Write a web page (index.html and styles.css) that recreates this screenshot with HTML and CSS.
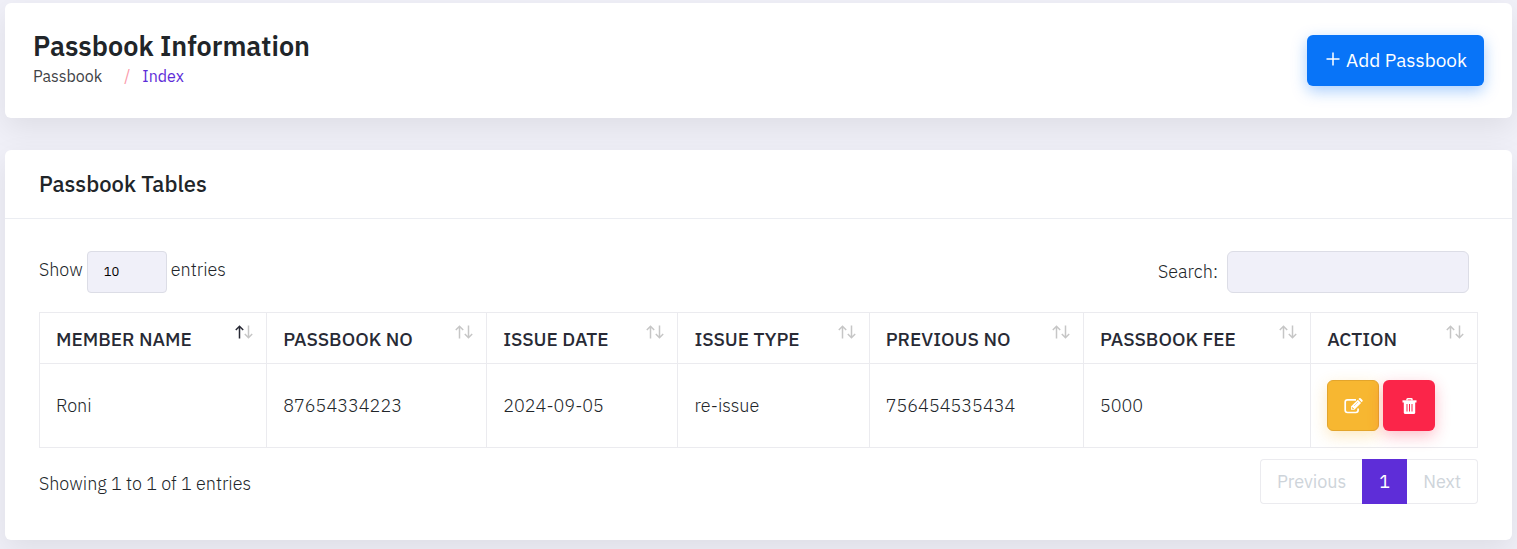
FILE: index.html
```html
<!DOCTYPE html>
<html lang="en">
<head>
<meta charset="utf-8">
<title>Passbook Information</title>
<link rel="stylesheet" href="styles.css">
</head>
<body>
<svg class="sprite" aria-hidden="true">
  <symbol id="arrow-up" viewBox="0 0 9 14"><path d="M4.5 13.5V1.500M.8 5l3.700-3.700L8.200 5" fill="none" stroke="currentColor" stroke-width="1.5"/></symbol>
  <symbol id="arrow-down" viewBox="0 0 9 14"><path d="M4.5 .5v12M.8 9l3.700 3.700L8.200 9" fill="none" stroke="currentColor" stroke-width="1.5"/></symbol>
</svg>
<main class="page">
  <header class="card page-header">
    <div>
      <h1 class="page-title">Passbook Information</h1>
      <nav class="breadcrumb" aria-label="Breadcrumb">
        <span>Passbook</span>
        <span class="breadcrumb-separator">/</span>
        <a class="breadcrumb-link" href="#">Index</a>
      </nav>
    </div>
    <button class="button button-add" type="button">
      <svg class="icon-plus" viewBox="0 0 14 16" aria-hidden="true"><path d="M7 .5v13M.5 7h13" stroke="currentColor" stroke-width="1.5"/></svg>
      Add Passbook
    </button>
  </header>

  <section class="card">
    <h2 class="card-title">Passbook Tables</h2>
    <div class="card-body">
      <div class="controls">
        <div class="length">
          <label for="length">Show</label>
          <select class="field length-select" id="length"><option>10</option><option>25</option><option>50</option></select>
          <span>entries</span>
        </div>
        <div class="search">
          <label for="search">Search:</label>
          <input class="field search-input" id="search" type="search">
        </div>
      </div>
      <table class="table">
        <colgroup>
          <col class="col-member"><col class="col-passbook"><col class="col-date"><col class="col-type"><col class="col-previous"><col class="col-fee"><col class="col-action">
        </colgroup>
        <thead>
          <tr>
            <th scope="col"><div class="heading">MEMBER NAME<span class="sort sort-ascending"><svg><use href="#arrow-up"/></svg><svg><use href="#arrow-down"/></svg></span></div></th>
            <th scope="col"><div class="heading">PASSBOOK NO<span class="sort"><svg><use href="#arrow-up"/></svg><svg><use href="#arrow-down"/></svg></span></div></th>
            <th scope="col"><div class="heading">ISSUE DATE<span class="sort"><svg><use href="#arrow-up"/></svg><svg><use href="#arrow-down"/></svg></span></div></th>
            <th scope="col"><div class="heading">ISSUE TYPE<span class="sort"><svg><use href="#arrow-up"/></svg><svg><use href="#arrow-down"/></svg></span></div></th>
            <th scope="col"><div class="heading">PREVIOUS NO<span class="sort"><svg><use href="#arrow-up"/></svg><svg><use href="#arrow-down"/></svg></span></div></th>
            <th scope="col"><div class="heading">PASSBOOK FEE<span class="sort"><svg><use href="#arrow-up"/></svg><svg><use href="#arrow-down"/></svg></span></div></th>
            <th scope="col"><div class="heading">ACTION<span class="sort"><svg><use href="#arrow-up"/></svg><svg><use href="#arrow-down"/></svg></span></div></th>
          </tr>
        </thead>
        <tbody>
          <tr>
            <td>Roni</td>
            <td>87654334223</td>
            <td>2024-09-05</td>
            <td>re-issue</td>
            <td>756454535434</td>
            <td>5000</td>
            <td>
              <div class="actions">
                <button class="button button-edit" type="button" aria-label="Edit">
                  <svg class="icon-edit" viewBox="0 0 19 16" aria-hidden="true"><path d="M12 1.800H3.500Q1.200 1.800 1.200 4v8.300q0 2.200 2.300 2.200h8.300q2.300 0 2.300-2.200V10.500" fill="none" stroke="currentColor" stroke-width="1.700"/><path d="M7 8.500L13.800 1.700l3.300 3.300L10.300 11.800H7z" fill="currentColor"/><path d="M14.500 1l.7-.7q.7-.5 1.400 0l1.800 1.800q.6.700 0 1.400l-.7.700z" fill="currentColor"/><path d="M8.300 9v1.500h1.600" fill="none" stroke="#f7b731" stroke-width=".8"/><path d="M10 8l4-4" stroke="#f7b731" stroke-width=".5"/></svg>
                </button>
                <button class="button button-delete" type="button" aria-label="Delete">
                  <svg class="icon-trash" viewBox="0 0 15 16" aria-hidden="true"><path d="M5 2.500V1.500Q5 .8 5.700 .8h3.600Q10 .8 10 1.500v1" fill="none" stroke="currentColor" stroke-width="1.500"/><path d="M.5 2.300h14v2.200H.5z" fill="currentColor"/><path d="M1.800 4h11.400v10.500q0 1.500-1.500 1.500H3.300q-1.500 0-1.500-1.500z" fill="currentColor"/><path d="M5 6v7.500M7.500 6v7.500M10 6v7.500" stroke="#fb2549" stroke-width="1"/></svg>
                </button>
              </div>
            </td>
          </tr>
        </tbody>
      </table>
      <footer class="table-footer">
        <p class="summary">Showing 1 to 1 of 1 entries</p>
        <nav class="pagination" aria-label="Table pages">
          <button class="page-button" type="button" disabled>Previous</button>
          <button class="page-button page-current" type="button" aria-current="page">1</button>
          <button class="page-button" type="button" disabled>Next</button>
        </nav>
      </footer>
    </div>
  </section>
</main>
</body>
</html>
```
FILE: styles.css
```css
* {
  box-sizing: border-box;
}

body {
  margin: 0;
  background: #f0f0f8;
  color: #212529;
  font-family: "IBM Plex Sans", Roboto, "Noto Sans", sans-serif;
  font-size: 18px;
  font-weight: 300;
  line-height: 28px;
}

button,
input,
select {
  font: inherit;
}

.sprite {
  position: absolute;
  width: 0;
  height: 0;
}

.page {
  display: flex;
  flex-direction: column;
  gap: 32px;
  padding: 3px 5px 9px;
}

.card {
  border-radius: 6px;
  background: #fff;
  box-shadow: 0 10px 30px rgba(0, 0, 0, 0.08);
}

.page-header {
  display: flex;
  align-items: center;
  justify-content: space-between;
  padding: 27px 28px 28px;
}

.page-title {
  margin: 0;
  font-size: 27px;
  font-weight: 600;
  line-height: 32px;
}

.breadcrumb {
  display: flex;
  color: #3f4347;
  font-size: 16px;
  font-weight: 400;
}

.breadcrumb-separator {
  padding: 0 12px 0 22px;
  color: #fb9aab;
}

.breadcrumb-link {
  color: #5e2dd8;
  text-decoration: none;
}

.button {
  display: flex;
  align-items: center;
  justify-content: center;
  border: 1px solid transparent;
  border-radius: 6px;
  color: #fff;
}

.button-add {
  gap: 6px;
  height: 51px;
  padding: 0 16px 0 18px;
  background: #0874f8;
  box-shadow: 0 5px 15px rgba(8, 116, 248, 0.35);
  font-size: 19px;
  font-weight: 400;
}

.icon-plus {
  width: 14px;
  height: 16px;
}

.card-title {
  margin: 0;
  padding: 20px 34px;
  border-bottom: 1px solid #ebedf2;
  font-size: 22px;
  font-weight: 500;
}

.card-body {
  padding: 32px 34px 36px;
}

.controls {
  display: flex;
  justify-content: space-between;
  margin-bottom: 19px;
  padding-right: 9px;
}

.length,
.search {
  display: flex;
  align-items: center;
}

.length {
  align-items: flex-start;
  gap: 4px;
  line-height: 38px;
}

.search {
  gap: 9px;
}

.field {
  height: 42px;
  padding: 0 16px;
  border: 1px solid #dcdde6;
  border-radius: 6px;
  background: #f0f0f9;
  color: #000;
}

.length-select {
  width: 80px;
  border-radius: 4px;
  appearance: none;
  font-size: 13px;
  font-weight: 400;
}

.search-input {
  width: 242px;
}

.table {
  width: 100%;
  border-collapse: collapse;
  table-layout: fixed;
}

.col-member { width: 15.8%; }
.col-passbook { width: 15.3%; }
.col-date { width: 13.3%; }
.col-type { width: 13.3%; }
.col-previous { width: 14.9%; }
.col-fee { width: 15.8%; }
.col-action { width: 11.6%; }

.table th,
.table td {
  border: 1px solid #ebebef;
  text-align: left;
}

.table th {
  padding: 12px 13px 10px 16px;
  font-size: 19px;
  font-weight: 500;
}

.table td {
  padding: 16px;
}

.heading {
  display: flex;
  align-items: flex-start;
  justify-content: space-between;
  color: #282a35;
  white-space: nowrap;
}

.sort {
  display: flex;
  color: #c6c6c6;
}

.sort svg {
  width: 9px;
  height: 14px;
}

.sort-ascending svg:first-child {
  color: #282a35;
}

.actions {
  display: flex;
  gap: 4px;
}

.button-edit,
.button-delete {
  width: 52px;
  height: 51px;
  padding: 0;
}

.button-edit {
  border-color: #e3a52c;
  background: #f7b731;
  box-shadow: 0 5px 15px rgba(247, 183, 49, 0.3);
}

.button-delete {
  background: #fb2549;
  box-shadow: 0 5px 15px rgba(251, 37, 73, 0.3);
}

.icon-edit {
  width: 19px;
  height: 16px;
}

.icon-trash {
  width: 15px;
  height: 16px;
}

.table-footer {
  display: flex;
  align-items: flex-start;
  justify-content: space-between;
  margin-top: 11px;
}

.summary {
  margin: 11px 0 0;
}

.pagination {
  display: flex;
}

.page-button {
  height: 45px;
  padding: 0 16px;
  border: 1px solid #ebebef;
  background: #fff;
  color: #ced4da;
  font-weight: 400;
}

.page-button:first-child {
  border-right: 0;
  border-radius: 4px 0 0 4px;
}

.page-button:last-child {
  border-left: 0;
  border-radius: 0 4px 4px 0;
}

.page-current {
  border-color: #5e2dd8;
  background: #5e2dd8;
  color: #fff;
}
```
